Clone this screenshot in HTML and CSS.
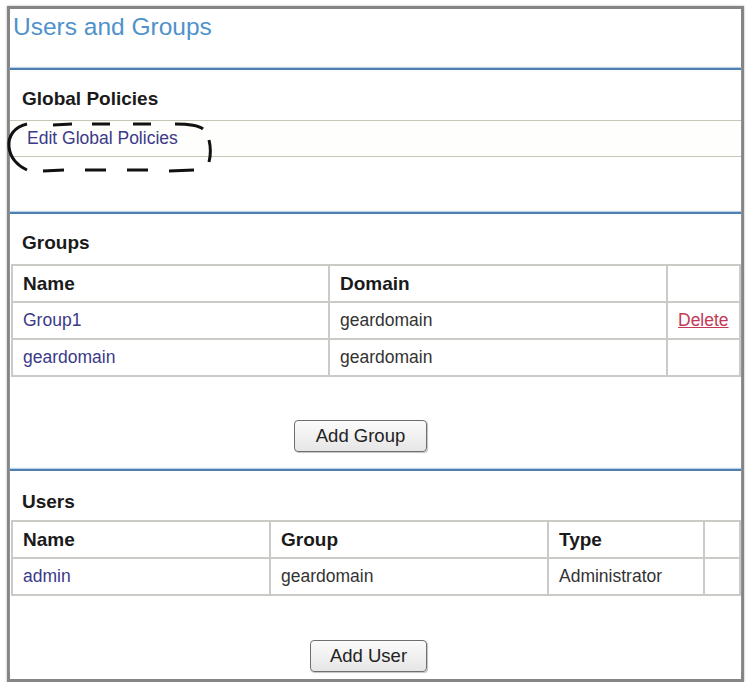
FILE: index.html
```html
<!DOCTYPE html>
<html lang="en">

<head>
    <meta charset="UTF-8">
    <meta name="viewport" content="width=device-width, initial-scale=1.0">
    <title>Users and Groups</title>
    <link rel="stylesheet" href="styles.css">
</head>

<body>
    <div class="cerceve">
        <div class="baslik">Users and Groups</div>

        <!-- Global Policies -->
        <div class="bolum">
            <div class="bolumBaslik">Global Policies</div>
            <div class="linkSatir"><a href="#" class="link">Edit Global Policies</a></div>
            <div class="bosluk"></div>
        </div>

        <!-- Groups -->
        <div class="bolum">
            <div class="bolumBaslik">Groups</div>
            <table class="liste">
                <colgroup>
                    <col class="g1">
                    <col class="g2">
                    <col>
                </colgroup>
                <tr>
                    <th>Name</th>
                    <th>Domain</th>
                    <th></th>
                </tr>
                <tr>
                    <td><a href="#" class="link">Group1</a></td>
                    <td>geardomain</td>
                    <td><a href="#" class="sil">Delete</a></td>
                </tr>
                <tr>
                    <td><a href="#" class="link">geardomain</a></td>
                    <td>geardomain</td>
                    <td></td>
                </tr>
            </table>
            <div class="butonSatir grupBtn"><button class="btn">Add Group</button></div>
        </div>

        <!-- Users -->
        <div class="bolum">
            <div class="bolumBaslik kullaniciBaslik">Users</div>
            <table class="liste">
                <colgroup>
                    <col class="u1">
                    <col class="u2">
                    <col class="u3">
                    <col>
                </colgroup>
                <tr>
                    <th>Name</th>
                    <th>Group</th>
                    <th>Type</th>
                    <th></th>
                </tr>
                <tr>
                    <td><a href="#" class="link">admin</a></td>
                    <td>geardomain</td>
                    <td>Administrator</td>
                    <td></td>
                </tr>
            </table>
            <div class="butonSatir kullaniciBtn"><button class="btn">Add User</button></div>
        </div>
    </div>

    <!-- el cizimi isaret -->
    <svg class="isaret" width="751" height="200" viewBox="0 0 751 200">
        <g fill="none" stroke="#111" stroke-width="3">
            <path d="M27 124 C14 127 8 136 9 147 C10 158 18 166 27 170" />
            <path d="M53 125 L72 124 M92 124 L110 124 M133 124 L151 124 M175 124 C190 124 198 125 203 129" />
            <path d="M209 140 C211 148 211 154 209 162" />
            <path d="M43 171 L64 170 M85 170 L106 170 M127 170 L148 170 M169 171 L194 170" />
        </g>
    </svg>
</body>

</html>
```

FILE: styles.css
```css
/* Resetleme */
* {
    margin: 0;
    padding: 0;
    box-sizing: border-box;
}

body {
    background-color: #fff;
    font-family: "Liberation Sans", Arial, sans-serif;
    color: #333;
}

/* Cerceve */
.cerceve {
    width: 737px;
    height: 676px;
    margin: 6px 0 0 7px;
    border: 3px solid #858585;
    box-shadow: 0 0 2px #aaa;
}

.baslik {
    height: 59px;
    padding: 3px 0 0 3px;
    font-size: 24.5px;
    line-height: 30px;
    color: #4f92cb;
}

.bolum {
    border-top: 2px solid #4f7fae;
    box-shadow: 0 -1px 1px #b9d3ea;
}

.bolumBaslik {
    height: 50px;
    padding: 18px 0 0 12px;
    font-size: 19px;
    line-height: 22px;
    font-weight: bold;
    color: #1a1a1a;
}

.kullaniciBaslik {
    height: 49px;
    padding-top: 20px;
}

.linkSatir {
    height: 37px;
    padding-left: 17px;
    border-top: 1px solid #c9c6b6;
    border-bottom: 1px solid #c9c6b6;
    background-color: #fefefc;
    font-size: 17.5px;
    line-height: 34px;
}

.bosluk {
    height: 55px;
}

.link {
    color: #3a3a88;
    text-decoration: none;
}

.sil {
    color: #c23a55;
}

/* Tablolar */
.liste {
    width: calc(100% - 1px);
    margin-left: 1px;
    border-collapse: collapse;
    font-size: 17.5px;
}

.liste th,
.liste td {
    height: 37px;
    padding: 0 10px;
    border: 2px solid #cacac6;
    text-align: left;
    vertical-align: middle;
}

.liste th {
    font-size: 19px;
    color: #1a1a1a;
}

.g1 { width: 317px; }
.g2 { width: 338px; }
.u1 { width: 258px; }
.u2 { width: 278px; }
.u3 { width: 156px; }

/* Butonlar */
.butonSatir {
    display: flex;
    justify-content: center;
}

.grupBtn {
    height: 92px;
    padding-top: 43px;
    padding-right: 30px;
}

.kullaniciBtn {
    padding-top: 44px;
    padding-right: 14px;
}

.btn {
    height: 32px;
    padding: 0 21px;
    font-family: "Liberation Sans", Arial, sans-serif;
    font-size: 18.5px;
    color: #222;
    border: 1px solid #6f6f6f;
    border-radius: 4px;
    background: linear-gradient(#fbfbfb, #e6e6e6);
    box-shadow: 1px 1px 1px #c4c4c4;
}

.kullaniciBtn .btn {
    padding: 0 19px;
}

/* Isaret */
.isaret {
    position: absolute;
    left: 0;
    top: 0;
    pointer-events: none;
}
```
